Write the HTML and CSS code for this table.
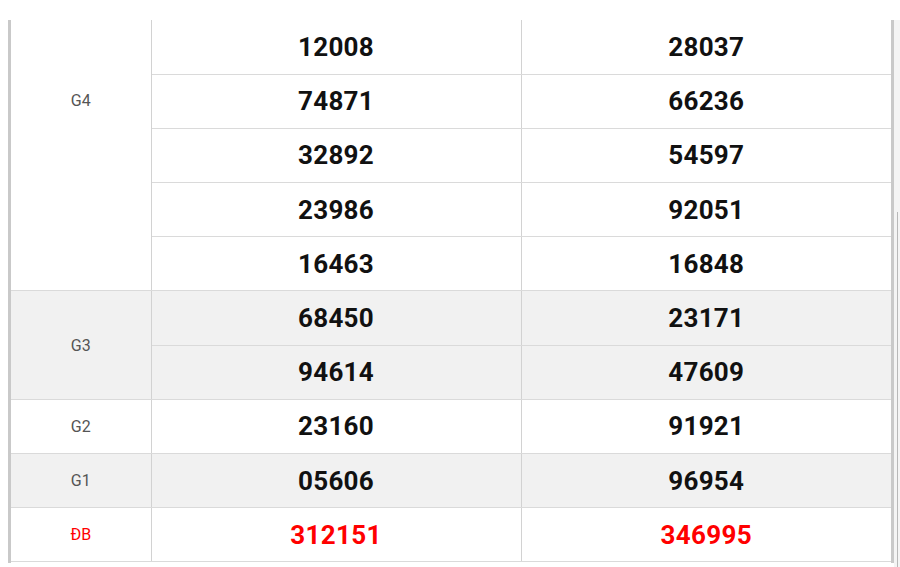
FILE: index.html
```html
<!DOCTYPE html>
<html>
<head>
<meta charset="utf-8">
<link rel="stylesheet" href="styles.css">
</head>
<body>
<div class="page">
  <div class="frame">
    <table class="results">
      <colgroup>
        <col class="c-label">
        <col class="c-num">
        <col class="c-num">
      </colgroup>
      <tbody>
        <tr>
          <td class="label label-top" rowspan="5">G4</td>
          <td class="num">12008</td>
          <td class="num">28037</td>
        </tr>
        <tr><td class="num">74871</td><td class="num">66236</td></tr>
        <tr><td class="num">32892</td><td class="num">54597</td></tr>
        <tr><td class="num">23986</td><td class="num">92051</td></tr>
        <tr><td class="num">16463</td><td class="num">16848</td></tr>
        <tr class="shade">
          <td class="label" rowspan="2">G3</td>
          <td class="num">68450</td>
          <td class="num">23171</td>
        </tr>
        <tr class="shade"><td class="num">94614</td><td class="num">47609</td></tr>
        <tr>
          <td class="label">G2</td>
          <td class="num">23160</td>
          <td class="num">91921</td>
        </tr>
        <tr class="shade">
          <td class="label">G1</td>
          <td class="num">05606</td>
          <td class="num">96954</td>
        </tr>
        <tr class="special">
          <td class="label">ĐB</td>
          <td class="num">312151</td>
          <td class="num">346995</td>
        </tr>
      </tbody>
    </table>
  </div>
  <div class="side"><div class="side-line"></div></div>
</div>
</body>
</html>
```

FILE: styles.css
```css
html, body {
  margin: 0;
  padding: 0;
  background: #fff;
}

body {
  font-family: Roboto, "Liberation Sans", Arial, sans-serif;
  overflow: hidden;
}

.page {
  display: flex;
  padding-top: 20px;
  padding-left: 8px;
  height: 567px;
  box-sizing: border-box;
}

.frame {
  width: 886px;
  border-left: 3px solid #c9c9c9;
  border-right: 3px solid #c9c9c9;
  box-sizing: border-box;
  height: 543px;
}

.side {
  flex: 1;
  background: #f4f4f4;
  display: flex;
  justify-content: flex-end;
  padding-right: 2px;
  padding-top: 192px;
  height: 547px;
  box-sizing: border-box;
}

.side-line {
  width: 1px;
  background: #b8b8b8;
  height: 100%;
}

.results {
  width: 100%;
  border-collapse: collapse;
  table-layout: fixed;
}

.c-label { width: 140px; }

.results tr {
  height: 54.2px;
}

.results td {
  padding: 0;
  text-align: center;
  vertical-align: middle;
  border-bottom: 1px solid #dadada;
  border-left: 1px solid #d2d2d2;
}

.results td:first-child {
  border-left: none;
}

.label {
  font-size: 16px;
  color: #555;
  border-right: 1px solid #d2d2d2;
}

.results td.label-top {
  vertical-align: top;
  padding-top: 71px;
}

.num {
  font-size: 26px;
  font-weight: 700;
  color: #111;
  letter-spacing: 0.3px;
}

.shade td {
  background: #f1f1f1;
}

.special .label,
.special .num {
  color: #f00;
}
```
